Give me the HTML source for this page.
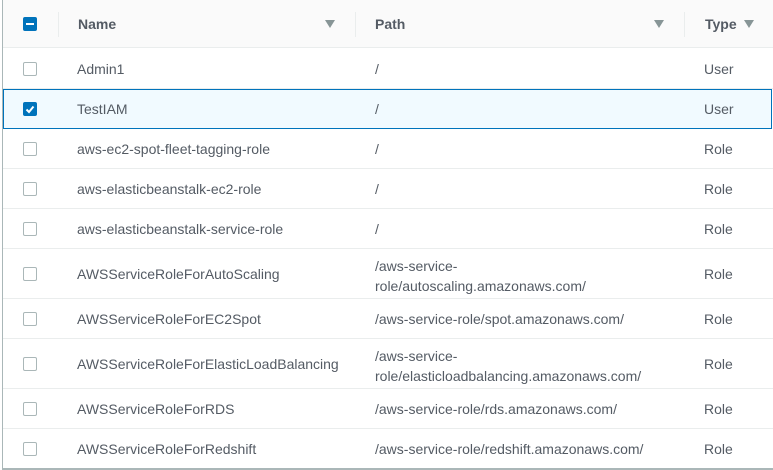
<!DOCTYPE html>
<html><head><meta charset="utf-8"><style>
*{margin:0;padding:0;box-sizing:border-box}
body{width:773px;height:470px;background:#fff;position:relative;overflow:hidden;font-family:"Liberation Sans",sans-serif;font-size:14px;color:#545b64}
.a{position:absolute;white-space:nowrap}
.hd{position:absolute;left:3px;top:0;width:770px;height:48px;background:#fafafa;border-bottom:1px solid #eaeded}
.ht{font-weight:bold;color:#545b64;top:16px}
.sep{position:absolute;top:12px;width:1px;height:25px;background:#eaeded}
.tri{position:absolute;width:0;height:0;border-left:5px solid transparent;border-right:5px solid transparent;border-top:8px solid #879596;top:20px}
.line{position:absolute;left:3px;width:770px;height:1px;background:#eaeded}
.cb{position:absolute;left:23px;width:14px;height:14px;border:1px solid #aab7b8;border-radius:2px;background:#fff}
.cbo{background:#0073bb;border-color:#0073bb}
</style></head><body>
<div class="a" style="left:2px;top:0;width:1px;height:470px;background:#aab7b8"></div>
<div class="hd"></div>
<div class="cb cbo" style="top:17px"><div style="position:absolute;left:2px;top:5px;width:8px;height:2px;background:#fff"></div></div>
<div class="sep" style="left:58px"></div>
<div class="sep" style="left:355px"></div>
<div class="sep" style="left:684px"></div>
<div class="a ht" style="left:78px">Name</div>
<div class="tri" style="left:325px"></div>
<div class="a ht" style="left:375px">Path</div>
<div class="tri" style="left:654px"></div>
<div class="a ht" style="left:705px">Type</div>
<div class="tri" style="left:744px"></div>

<div style="position:absolute;left:3px;top:89px;width:769px;height:40px;background:#f1faff;border:1px solid #0073bb"></div>
<div class="cb cbo" style="top:102px"><svg width="12" height="12" style="position:absolute;left:0;top:0"><path d="M2.5 6.5 L5 9 L9.5 3.5" stroke="#fff" stroke-width="2" fill="none"/></svg></div>

<div class="line" style="top:88px"></div>
<div class="line" style="top:168px"></div>
<div class="line" style="top:208px"></div>
<div class="line" style="top:248px"></div>
<div class="line" style="top:298px"></div>
<div class="line" style="top:338px"></div>
<div class="line" style="top:388px"></div>
<div class="line" style="top:428px"></div>
<div class="a" style="left:2px;top:468px;width:771px;height:2px;background:#aab7b8"></div>

<div class="cb" style="top:62px"></div>
<div class="cb" style="top:142px"></div>
<div class="cb" style="top:182px"></div>
<div class="cb" style="top:222px"></div>
<div class="cb" style="top:267px"></div>
<div class="cb" style="top:312px"></div>
<div class="cb" style="top:357px"></div>
<div class="cb" style="top:402px"></div>
<div class="cb" style="top:442px"></div>

<div class="a" style="left:77px;top:61px">Admin1</div>
<div class="a" style="left:77px;top:101px">TestIAM</div>
<div class="a" style="left:77px;top:141px">aws-ec2-spot-fleet-tagging-role</div>
<div class="a" style="left:77px;top:181px">aws-elasticbeanstalk-ec2-role</div>
<div class="a" style="left:77px;top:221px">aws-elasticbeanstalk-service-role</div>
<div class="a" style="left:77px;top:266px">AWSServiceRoleForAutoScaling</div>
<div class="a" style="left:77px;top:311px">AWSServiceRoleForEC2Spot</div>
<div class="a" style="left:77px;top:356px">AWSServiceRoleForElasticLoadBalancing</div>
<div class="a" style="left:77px;top:401px">AWSServiceRoleForRDS</div>
<div class="a" style="left:77px;top:441px">AWSServiceRoleForRedshift</div>

<div class="a" style="left:375px;top:61px">/</div>
<div class="a" style="left:375px;top:101px">/</div>
<div class="a" style="left:375px;top:141px">/</div>
<div class="a" style="left:375px;top:181px">/</div>
<div class="a" style="left:375px;top:221px">/</div>
<div class="a" style="left:375px;top:256px;line-height:20px">/aws-service-<br>role/autoscaling.amazonaws.com/</div>
<div class="a" style="left:375px;top:311px">/aws-service-role/spot.amazonaws.com/</div>
<div class="a" style="left:375px;top:346px;line-height:20px">/aws-service-<br>role/elasticloadbalancing.amazonaws.com/</div>
<div class="a" style="left:375px;top:401px">/aws-service-role/rds.amazonaws.com/</div>
<div class="a" style="left:375px;top:441px">/aws-service-role/redshift.amazonaws.com/</div>

<div class="a" style="left:704px;top:61px">User</div>
<div class="a" style="left:704px;top:101px">User</div>
<div class="a" style="left:704px;top:141px">Role</div>
<div class="a" style="left:704px;top:181px">Role</div>
<div class="a" style="left:704px;top:221px">Role</div>
<div class="a" style="left:704px;top:266px">Role</div>
<div class="a" style="left:704px;top:311px">Role</div>
<div class="a" style="left:704px;top:356px">Role</div>
<div class="a" style="left:704px;top:401px">Role</div>
<div class="a" style="left:704px;top:441px">Role</div>
</body></html>
